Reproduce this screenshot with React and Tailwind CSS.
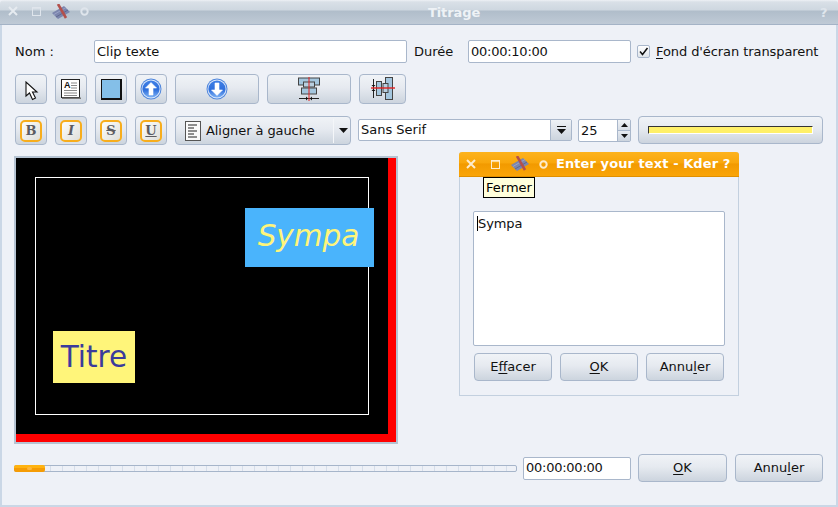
import React from 'react';

const font = { fontFamily: '"DejaVu Sans", sans-serif' };

const btnClass =
  'flex items-center justify-center shrink-0 rounded-[4px] border border-[#a9b7cb] bg-[linear-gradient(180deg,#f0f3f7_0%,#e6eaf0_45%,#ccd4de_100%)] text-[13px] text-[#111]';

function Bolt() {
  return (
    <svg width="18" height="16" viewBox="0 0 18 16" className="shrink-0">
      <path d="M0 9 L12 2 L18 8 L6 15 Z" fill="#7c86ae" />
      <path d="M2 10.5 L14 3.5" stroke="#9aa3c6" strokeWidth="1" />
      <path d="M4 13 L16 6" stroke="#5f688f" strokeWidth="1" />
      <path d="M6 0 L14 14" stroke="#b3504c" strokeWidth="2.6" />
    </svg>
  );
}

function CloseGlyph({ cls }) {
  return (
    <svg width="10" height="10" viewBox="0 0 10 10" className={cls}>
      <path d="M1 1 L9 9 M9 1 L1 9" stroke="currentColor" strokeWidth="2" fill="none" />
    </svg>
  );
}

function MaxGlyph({ cls }) {
  return (
    <svg width="9" height="9" viewBox="0 0 9 9" className={cls}>
      <rect x="0.5" y="0.5" width="8" height="8" stroke="currentColor" fill="none" />
      <rect x="0" y="0" width="9" height="2" fill="currentColor" opacity="0.7" />
    </svg>
  );
}

function Dot({ cls }) {
  return (
    <svg width="9" height="9" viewBox="0 0 9 9" className={cls}>
      <circle cx="4.5" cy="4.5" r="3.2" stroke="currentColor" strokeWidth="2" fill="none" />
    </svg>
  );
}

function Arrow({ up }) {
  const id = up ? 'ballUp' : 'ballDown';
  return (
    <svg width="22" height="22" viewBox="0 0 22 22">
      <defs>
        <linearGradient id={id} x1="0" y1="0" x2="0" y2="1">
          <stop offset="0" stopColor="#3f7fe6" />
          <stop offset="0.55" stopColor="#2f6fdc" />
          <stop offset="1" stopColor="#7fb2f4" />
        </linearGradient>
      </defs>
      <circle cx="11" cy="11" r="10.5" fill="#4f86dc" />
      <circle cx="11" cy="11" r="9.5" fill="#dbe8fb" />
      <circle cx="11" cy="11" r="8.6" fill={`url(#${id})`} />
      {up ? (
        <path d="M11 4.5 L16.5 10 L13 10 L13 17 L9 17 L9 10 L5.5 10 Z" fill="#fff" stroke="#fff" strokeWidth="0.6" strokeLinejoin="round" />
      ) : (
        <path d="M11 17.5 L16.5 12 L13 12 L13 5 L9 5 L9 12 L5.5 12 Z" fill="#fff" stroke="#fff" strokeWidth="0.6" strokeLinejoin="round" />
      )}
    </svg>
  );
}

function FormatBtn({ glyph, pressed, underline, strike }) {
  return (
    <div className={`${btnClass} w-[32px] h-[29px] ${pressed ? 'bg-none bg-[#dbe1e9]' : ''}`}>
      <div className="flex h-[22px] w-[22px] items-center justify-center rounded-[5px] border-2 border-[#f7ad1c] bg-[linear-gradient(135deg,#fdfdfa,#dedfdc)]">
        <span
          className={`text-[13px] leading-none font-bold text-[#5c5c62] ${underline ? 'underline' : ''} ${strike ? 'line-through' : ''} ${pressed ? 'italic' : ''}`}
          style={{ fontFamily: '"DejaVu Serif", serif' }}
        >
          {glyph}
        </span>
      </div>
    </div>
  );
}

function DownTriangle({ bar }) {
  return (
    <svg width="11" height="9" viewBox="0 0 11 9">
      {bar && <rect x="1" y="0" width="9" height="1" fill="#111" />}
      <path d={bar ? 'M1 3 L10 3 L5.5 8 Z' : 'M1 2 L10 2 L5.5 7 Z'} fill="#111" />
    </svg>
  );
}

function U({ children }) {
  return <span className="underline underline-offset-2">{children}</span>;
}

export default function App() {
  return (
    <div className="relative flex h-[507px] w-[838px] flex-col overflow-hidden bg-[#eef1f7] text-[13px] text-[#111]" style={font}>
      {/* barre de titre */}
      <div className="relative flex h-[25px] shrink-0 items-center rounded-t-[4px] border-b border-[#a4b3c6] bg-[linear-gradient(180deg,#eef1f5_0px,#d9e0e7_2px,#ced7e0_10px,#b0bdca_11px,#bfcad6_24px)] pl-[8px] text-[#e6ebf0]">
        <CloseGlyph cls="mt-[-2px] mr-[14px]" />
        <MaxGlyph cls="mt-[-2px] mr-[11px] text-[#dfe5ec]" />
        <Bolt />
        <Dot cls="mt-[-2px] ml-[10px] text-[#dfe5ec]" />
        <span className="absolute top-[3px] left-[428px] text-[13px] font-bold tracking-[-0.1px] text-[#eef2f6]">Titrage</span>
        <span className="absolute top-[3px] left-[820px] text-[13px] font-bold text-[#dfe5ec]">?</span>
      </div>

      {/* corps */}
      <div className="flex grow flex-col border-x-2 border-b-2 border-[#cad7e6] pl-[13px]">
        <div className="mt-[15px] flex h-[23px] items-center">
          <span className="w-[79px] shrink-0">Nom :</span>
          <div className="flex h-[23px] w-[313px] items-center rounded-[2px] border border-[#a9b7cb] bg-white pl-[2px]">Clip texte</div>
          <span className="ml-[7px] w-[54px] shrink-0">Durée</span>
          <div className="flex h-[23px] w-[163px] items-center rounded-[2px] border border-[#a9b7cb] bg-white pl-[2px] tracking-[-0.25px]">00:00:10:00</div>
          <div className="ml-[6px] flex h-[13px] w-[13px] items-center justify-center rounded-[2px] border border-[#a9b7cb] bg-[linear-gradient(180deg,#fff,#dfe4ea)]">
            <svg width="11" height="11" viewBox="0 0 11 11">
              <path d="M2 5.5 L4.5 8.5 L9.5 2" stroke="#111" strokeWidth="1.5" fill="none" />
            </svg>
          </div>
          <span className="ml-[6px] whitespace-nowrap tracking-[-0.08px]">
            <U>F</U>ond d'écran transparent
          </span>
        </div>

        <div className="mt-[11px] flex h-[30px] gap-[8px]">
          <div className={`${btnClass} w-[32px]`}>
            <svg width="14" height="20" viewBox="0 0 14 20" className="mt-[3px] ml-[1px]">
              <path d="M1 1 L1 15 L4.5 12 L7.5 18.5 L10.5 17 L7.5 11 L12 11 Z" fill="#fff" stroke="#111" strokeWidth="1.1" />
            </svg>
          </div>
          <div className={`${btnClass} w-[32px]`}>
            <svg width="20" height="20" viewBox="0 0 20 20">
              <rect x="0.5" y="0.5" width="18" height="18" fill="#fff" stroke="#222" />
              <rect x="1" y="18.5" width="19" height="1.5" fill="#777" />
              <text x="3" y="9" fontSize="9" fontWeight="bold" fill="#111" fontFamily="Liberation Sans">A</text>
              <path d="M10 4 H16 M10 6.5 H16 M10 9 H16 M3 11.5 H16 M3 14 H16 M3 16.5 H16" stroke="#888" strokeWidth="1" />
            </svg>
          </div>
          <div className={`${btnClass} w-[32px]`}>
            <div className="h-[21px] w-[21px] border border-b-2 border-r-2 border-[#111] bg-[#84bfe8]"></div>
          </div>
          <div className={`${btnClass} w-[32px]`}>
            <Arrow up />
          </div>
          <div className={`${btnClass} w-[84px]`}>
            <Arrow />
          </div>
          <div className={`${btnClass} w-[84px]`}>
            <svg width="22" height="24" viewBox="0 0 22 24">
              <rect x="0.5" y="1" width="21" height="7" fill="#a4c6de" stroke="#444" />
              <rect x="5.5" y="5" width="11" height="5" fill="#b8cfe0" stroke="#444" />
              <rect x="3.5" y="11" width="15" height="6" fill="#a4c6de" stroke="#444" />
              <path d="M1 21.5 H21" stroke="#222" />
              <path d="M8 19.5 L10 21.5 L8 23.5 Z M14 19.5 L12 21.5 L14 23.5 Z" fill="#111" />
              <path d="M11 0 V24" stroke="#e02020" />
            </svg>
          </div>
          <div className={`${btnClass} w-[47px]`}>
            <svg width="24" height="24" viewBox="0 0 24 24">
              <rect x="14.5" y="0.5" width="7" height="22" fill="#a4c6de" stroke="#444" />
              <rect x="12" y="6.5" width="5" height="9" fill="#b8cfe0" stroke="#444" />
              <rect x="5.5" y="4.5" width="5" height="14" fill="#a4c6de" stroke="#444" />
              <path d="M2.5 2 V21" stroke="#222" />
              <path d="M0.5 8 L2.5 10 L4.5 8 Z M0.5 14 L2.5 12 L4.5 14 Z" fill="#111" />
              <path d="M0 11 H24" stroke="#e02020" strokeWidth="1.4" />
            </svg>
          </div>
        </div>

        <div className="mt-[12px] flex h-[29px]">
          <div className="flex gap-[8px]">
            <FormatBtn glyph="B" />
            <FormatBtn glyph="I" pressed />
            <FormatBtn glyph="S" strike />
            <FormatBtn glyph="U" underline />
          </div>
          <div className={`${btnClass} ml-[8px] w-[176px] justify-start`}>
            <svg width="16" height="20" viewBox="0 0 16 20" className="ml-[9px] shrink-0">
              <rect x="0.5" y="0.5" width="15" height="19" fill="#fafafa" stroke="#555" />
              <path d="M3 4 H12 M3 7 H9 M3 10 H12 M3 13 H9 M3 16 H12" stroke="#222" />
            </svg>
            <span className="ml-[5px] w-[109px] whitespace-nowrap tracking-[-0.08px]">Aligner à gauche</span>
            <div className="ml-[18px] h-[24px] w-px bg-[#f4f6f9]"></div>
            <div className="ml-[4px]">
              <DownTriangle />
            </div>
          </div>
          <div className="mt-[3px] ml-[7px] flex h-[22px] w-[214px] rounded-[2px] border border-[#a9b7cb] bg-white">
            <span className="flex grow items-center pl-[2px]">Sans Serif</span>
            <div className="flex w-[21px] items-center justify-center border-l border-[#a9b7cb] bg-[linear-gradient(180deg,#eef1f5,#ccd4de)]">
              <DownTriangle bar />
            </div>
          </div>
          <div className="mt-[3px] ml-[6px] flex h-[23px] w-[53px] rounded-[2px] border border-[#a9b7cb] bg-white">
            <span className="flex grow items-center pl-[2px]">25</span>
            <div className="flex w-[13px] flex-col border-l border-[#a9b7cb]">
              <div className="flex grow items-center justify-center border-b border-[#a9b7cb] bg-[linear-gradient(180deg,#f0f3f7,#d8dee6)]">
                <svg width="7" height="4" viewBox="0 0 7 4"><path d="M0 4 L7 4 L3.5 0 Z" fill="#111" /></svg>
              </div>
              <div className="flex grow items-center justify-center bg-[linear-gradient(180deg,#e6eaf0,#ccd4de)]">
                <svg width="7" height="4" viewBox="0 0 7 4"><path d="M0 0 L7 0 L3.5 4 Z" fill="#111" /></svg>
              </div>
            </div>
          </div>
          <div className={`${btnClass} ml-[7px] h-[28px] w-[185px]`}>
            <div className="h-[8px] w-[165px] border border-t-[#333] border-l-[#333] border-r-white border-b-white bg-[#fff068]"></div>
          </div>
        </div>

        {/* zone d'aperçu */}
        <div className="relative mt-[11px] ml-[-1px] h-[288px] w-[384px] border-2 border-[#b5c3d2] bg-black">
          <div className="absolute top-0 right-0 h-full w-[8px] bg-[#ff0000]"></div>
          <div className="absolute bottom-0 left-0 h-[8px] w-full bg-[#ff0000]"></div>
          <div className="absolute top-[19px] left-[19px] h-[238px] w-[334px] border border-white"></div>
          <div className="absolute top-[50px] left-[229px] flex h-[59px] w-[129px] items-center justify-center bg-[#4ab4fc] pr-[2px] pb-[2px] text-[29.5px] text-[#fff57a] italic">
            Sympa
          </div>
          <div className="absolute top-[173px] left-[37px] flex h-[52px] w-[82px] items-center justify-center bg-[#fff57a] text-[29.5px] text-[#3b3b9c]">
            Titre
          </div>
        </div>

        {/* pied */}
        <div className="mt-[10px] ml-[-1px] flex h-[28px] items-center">
          <div className="flex h-[7px] w-[503px] rounded-[2px] border border-[#a6b5ca] bg-[repeating-linear-gradient(90deg,#eef1f7_0px,#eef1f7_11px,#d6deea_11px,#d6deea_12px)]">
            <div className="mt-[-1px] mb-[-1px] ml-[-1px] flex h-[7px] w-[31px] items-center justify-center rounded-[2px] bg-[linear-gradient(180deg,#ffb310_0%,#ffb310_50%,#f59c05_50%,#f59c05_100%)]">
              <div className="h-[3px] w-[5px] rounded-[2px] bg-[#ffb73a]"></div>
            </div>
          </div>
          <div className="ml-[6px] flex h-[23px] w-[108px] items-center rounded-[2px] border border-[#a9b7cb] bg-white pl-[2px] tracking-[-0.25px]">00:00:00:00</div>
          <div className={`${btnClass} ml-[7px] h-[28px] w-[89px]`}>
            <span><U>O</U>K</span>
          </div>
          <div className={`${btnClass} ml-[8px] h-[28px] w-[88px]`}>
            <span>Annu<U>l</U>er</span>
          </div>
        </div>
      </div>

      {/* fenêtre flottante */}
      <div className="absolute top-[152px] left-[459px] flex h-[244px] w-[280px] flex-col rounded-t-[3px] border-x border-b border-[#c3d0df] bg-[#eef1f7]">
        <div className="relative mx-[-1px] flex h-[25px] shrink-0 items-center rounded-t-[3px] border-b border-[#e09000] bg-[linear-gradient(180deg,#fdb31d_0%,#f9a70c_45%,#f29a00_50%,#faa508_100%)] pl-[7px] text-white">
          <CloseGlyph cls="mr-[15px] text-[#fdeccd]" />
          <MaxGlyph cls="mr-[11px] text-[#fdeccd]" />
          <Bolt />
          <Dot cls="ml-[10px] text-[#fdeccd]" />
          <span className="ml-[8px] whitespace-nowrap text-[13px] font-bold tracking-[0.08px]">Enter your text - Kder ?</span>
        </div>
        <div className="mx-[13px] mt-[34px] h-[135px] w-[252px] rounded-[2px] border border-[#a9b7cb] bg-white pt-[4px] pl-[3px] leading-[16px] tracking-[-0.08px]">
          <span className="border-l border-black">Sympa</span>
        </div>
        <div className="mt-[7px] ml-[14px] flex h-[28px] gap-[8px]">
          <div className={`${btnClass} w-[78px]`}>
            <span>E<U>f</U>facer</span>
          </div>
          <div className={`${btnClass} w-[78px]`}>
            <span><U>O</U>K</span>
          </div>
          <div className={`${btnClass} w-[78px]`}>
            <span>Annu<U>l</U>er</span>
          </div>
        </div>
      </div>

      {/* infobulle */}
      <div className="absolute top-[177px] left-[483px] flex h-[21px] w-[52px] items-center justify-center border border-black bg-[#ffffdc] text-[13px] text-black">
        Fermer
      </div>
    </div>
  );
}
